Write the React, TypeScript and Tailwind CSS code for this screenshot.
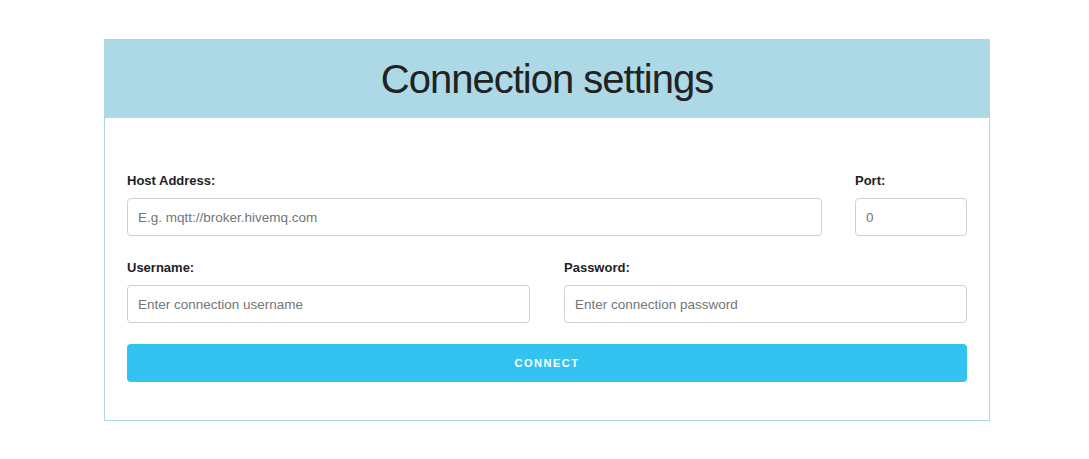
import React from "react";

export default function App() {
  const font = { fontFamily: '"Liberation Sans", Arial, sans-serif' };
  const inputCls =
    "h-[38px] w-full rounded-[4px] border border-[#d1d1d1] bg-white px-[10px] text-[13.5px] text-[#222] placeholder:text-[#757575] outline-none";
  const labelCls = "mb-[8px] block h-[20px] pt-[1px] text-[13px] font-bold leading-[20px] text-[#222]";
  return (
    <div className="min-h-[459px] w-full bg-white pt-[39px]" style={font}>
      <div className="ml-[104px] w-[886px] border border-[#add8e6]">
        <div className="flex h-[78px] items-center justify-center bg-[#add8e6]">
          <h1 className="text-[40px] font-normal tracking-[-1px] text-[#222]">Connection settings</h1>
        </div>
        <div className="px-[22px] pb-[38px] pt-[52px]">
          <div className="flex gap-[33px]">
            <div className="flex-1">
              <label className={labelCls}>Host Address:</label>
              <input className={inputCls} placeholder="E.g. mqtt://broker.hivemq.com" />
            </div>
            <div className="w-[112px]">
              <label className={labelCls}>Port:</label>
              <input className={inputCls} placeholder="0" />
            </div>
          </div>
          <div className="mt-[21px] flex gap-[34px]">
            <div className="flex-1">
              <label className={labelCls}>Username:</label>
              <input className={inputCls} placeholder="Enter connection username" />
            </div>
            <div className="flex-1">
              <label className={labelCls}>Password:</label>
              <input className={inputCls} type="password" placeholder="Enter connection password" />
            </div>
          </div>
          <button className="mt-[21px] flex h-[38px] w-full items-center justify-center rounded-[4px] bg-[#33c3f0] pt-[1px] text-[11px] font-bold tracking-[1.5px] text-white">
            CONNECT
          </button>
        </div>
      </div>
    </div>
  );
}
